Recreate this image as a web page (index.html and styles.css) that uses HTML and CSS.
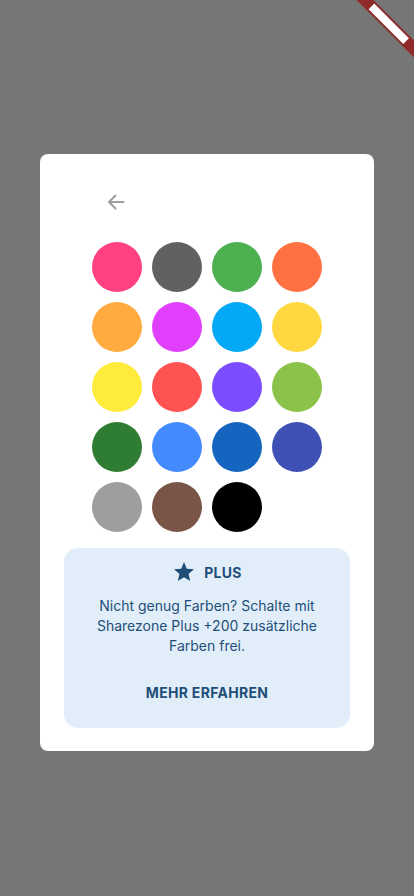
FILE: index.html
```html
<!DOCTYPE html>
<html lang="de">
<head>
<meta charset="utf-8">
<link rel="stylesheet" href="styles.css">
</head>
<body>
<div class="screen">
  <div class="dialog">
    <div class="top">
      <button class="back" aria-label="Zurück">
        <svg width="24" height="24" viewBox="0 0 24 24"><path d="M19.5 12H5M11.5 5.5L5 12l6.5 6.5" fill="none" stroke="#9e9e9e" stroke-width="2" stroke-linecap="round" stroke-linejoin="round"/></svg>
      </button>
    </div>
    <div class="grid">
      <span class="dot" style="background:#ff4081"></span>
      <span class="dot" style="background:#616161"></span>
      <span class="dot" style="background:#4caf50"></span>
      <span class="dot" style="background:#ff7043"></span>
      <span class="dot" style="background:#ffab40"></span>
      <span class="dot" style="background:#e040fb"></span>
      <span class="dot" style="background:#03a9f4"></span>
      <span class="dot" style="background:#ffd740"></span>
      <span class="dot" style="background:#ffeb3b"></span>
      <span class="dot" style="background:#ff5252"></span>
      <span class="dot" style="background:#7c4dff"></span>
      <span class="dot" style="background:#8bc34a"></span>
      <span class="dot" style="background:#2e7d32"></span>
      <span class="dot" style="background:#448aff"></span>
      <span class="dot" style="background:#1565c0"></span>
      <span class="dot" style="background:#3f51b5"></span>
      <span class="dot" style="background:#9e9e9e"></span>
      <span class="dot" style="background:#795548"></span>
      <span class="dot" style="background:#000000"></span>
    </div>
    <div class="plus">
      <div class="plus-head">
        <svg width="24" height="24" viewBox="0 0 24 24"><path d="M12 17.27L18.18 21l-1.64-7.03L22 9.24l-7.19-.61L12 2 9.19 8.63 2 9.24l5.46 4.73L5.82 21z" fill="#1f4e79"/></svg>
        <span class="plus-title">PLUS</span>
      </div>
      <p class="plus-text">Nicht genug Farben? Schalte mit Sharezone Plus +200 zusätzliche Farben frei.</p>
      <button class="more">MEHR ERFAHREN</button>
    </div>
  </div>
</div>
<div class="banner"></div>
</body>
</html>
```
FILE: styles.css
```css
html, body {
  margin: 0;
  padding: 0;
}
body {
  position: relative;
  background: #767676;
  width: 414px;
  height: 896px;
  overflow: hidden;
  font-family: Inter, "Noto Sans", sans-serif;
}
.screen {
  display: flex;
  justify-content: center;
  padding-top: 154px;
}
.dialog {
  width: 334px;
  box-sizing: border-box;
  background: #fff;
  border-radius: 8px;
  padding: 24px 24px 23px;
  display: flex;
  flex-direction: column;
  align-items: center;
}
.top {
  width: 230px;
  display: flex;
}
.back {
  width: 48px;
  height: 48px;
  border: 0;
  background: none;
  padding: 0;
  display: flex;
  align-items: center;
  justify-content: center;
}
.grid {
  margin-top: 16px;
  width: 230px;
  display: grid;
  grid-template-columns: repeat(4, 50px);
  gap: 10px;
}
.dot {
  width: 50px;
  height: 50px;
  border-radius: 50%;
}
.plus {
  margin-top: 16px;
  width: 286px;
  box-sizing: border-box;
  background: #e1eef9;
  border-radius: 14px;
  padding: 12px 16px 16px;
  display: flex;
  flex-direction: column;
  align-items: center;
  color: #1f4e79;
}
.plus-head {
  display: flex;
  align-items: center;
  gap: 8px;
  height: 24px;
  margin-top: 0;
}
.plus-title {
  font-weight: 700;
  font-size: 14px;
  letter-spacing: 0.3px;
}
.plus-text {
  margin: 12px 0 0;
  font-size: 14px;
  line-height: 20px;
  text-align: center;
  width: 240px;
}
.more {
  margin-top: 16px;
  height: 40px;
  border: 0;
  background: none;
  color: #1f4e79;
  font-family: inherit;
  font-weight: 700;
  font-size: 14px;
  letter-spacing: 0.3px;
  padding: 0 12px;
}
.banner {
  position: absolute;
  left: 358px;
  top: -13px;
  width: 90px;
  height: 12px;
  background: #8f2a2a;
  transform-origin: 0 50%;
  transform: rotate(45deg);
}
.banner::after {
  content: "";
  position: absolute;
  top: 2px;
  bottom: 2px;
  left: 19px;
  width: 49px;
  background: #fff;
}
```
